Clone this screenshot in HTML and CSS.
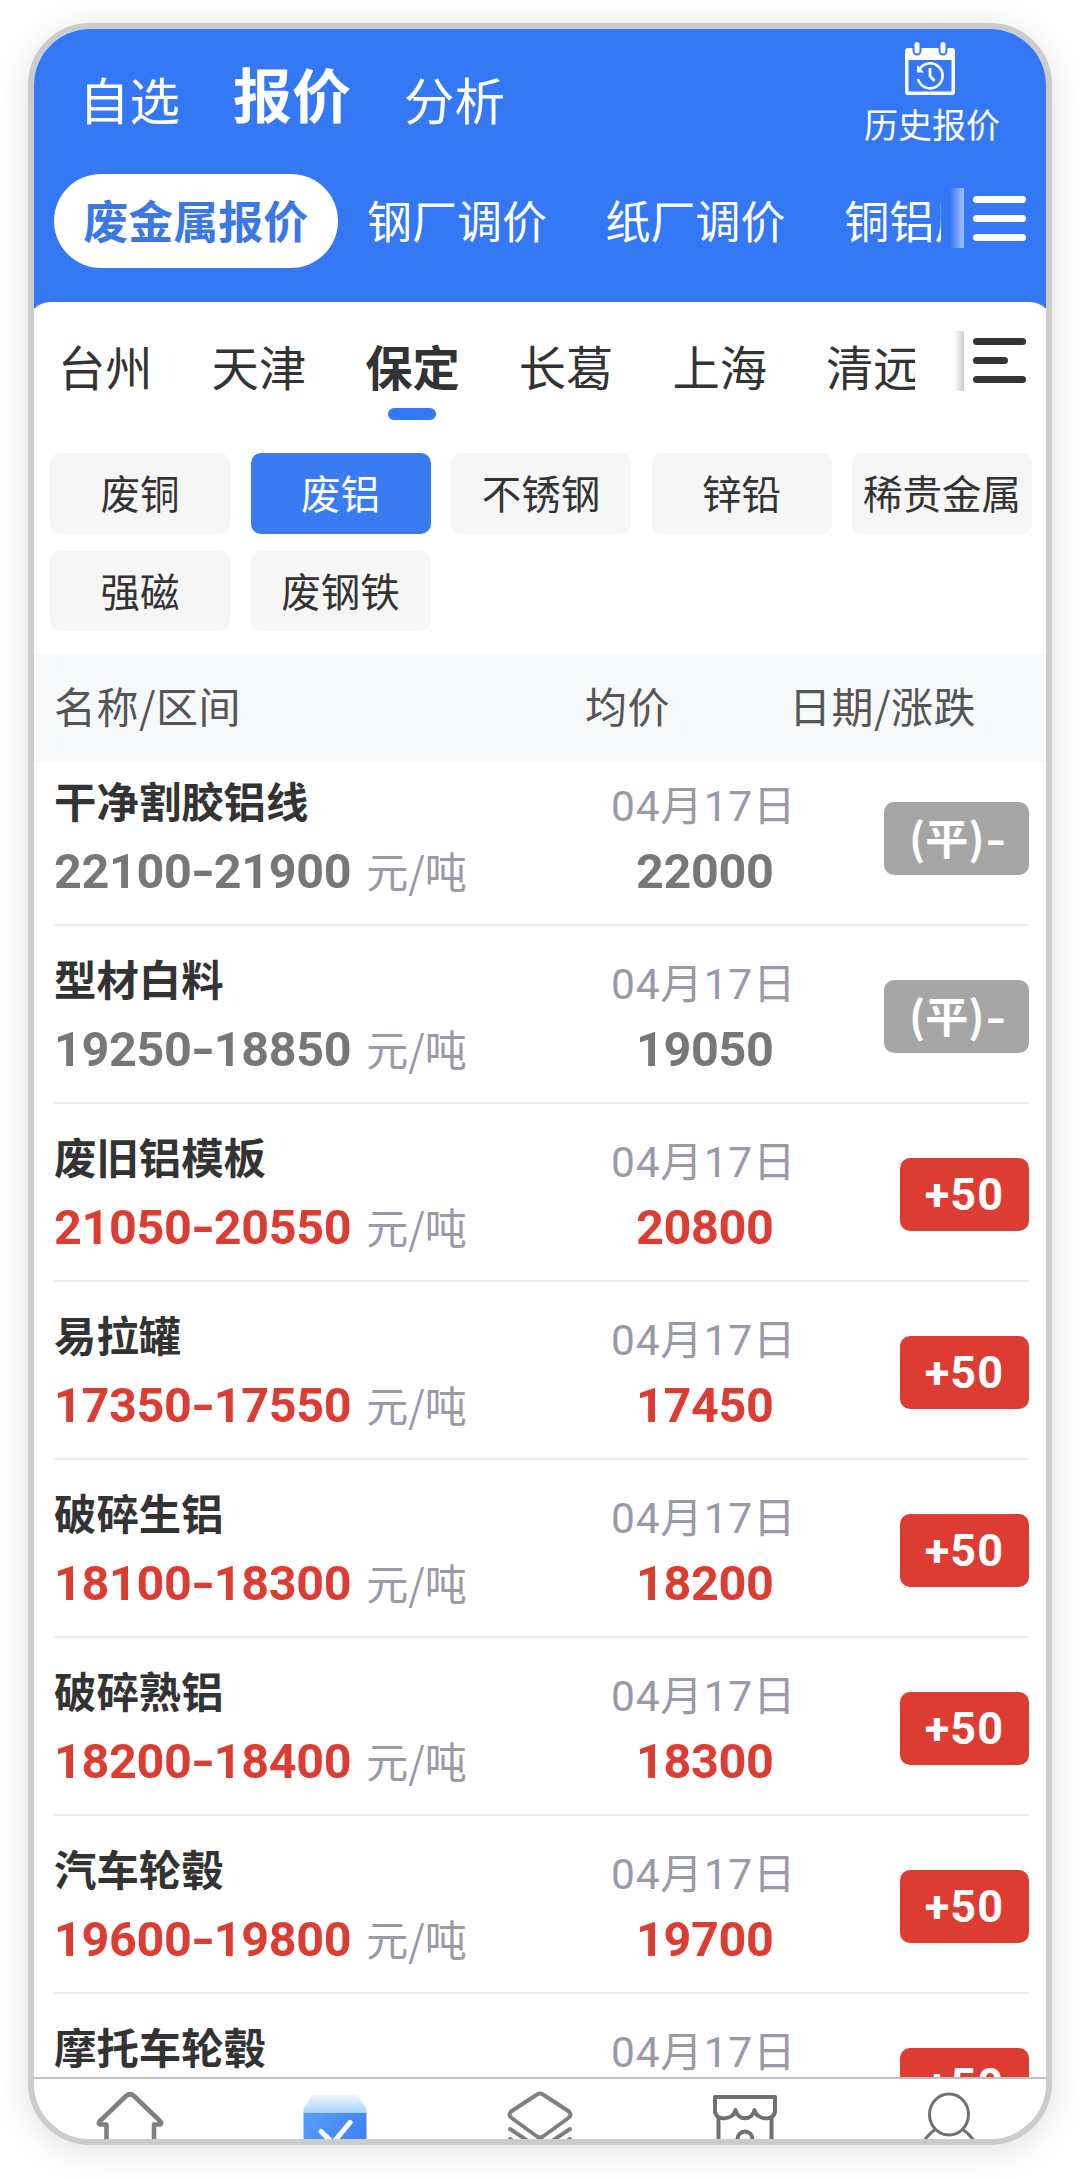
FILE: index.html
```html
<!DOCTYPE html>
<html lang="zh-CN">
<head>
    <meta charset="UTF-8">
    <meta name="viewport" content="width=device-width, initial-scale=1.0">
    <title>废金属报价</title>
    <link rel="stylesheet" href="styles.css">
</head>
<body>
    <div class="phone">
        <header>
            <div class="top-bar">
                <nav class="top-nav">
                    <a>自选</a>
                    <a class="active">报价</a>
                    <a>分析</a>
                </nav>
                <div class="history">
                    <svg width="52" height="56" viewBox="0 0 52 56" fill="none">
                        <path d="M4 7H48a3 3 0 0 1 3 3V51a3 3 0 0 1-3 3H4a3 3 0 0 1-3-3V10a3 3 0 0 1 3-3zM4.500 19V50.500H47.500V19z" fill="#fff" fill-rule="evenodd"/>
                        <path d="M13 4V10M39 4V10" stroke="#3478f6" stroke-width="9" stroke-linecap="round"/>
                        <path d="M13 3.500V10M39 3.500V10" stroke="#fff" stroke-width="5" stroke-linecap="round"/>
                        <path d="M15 29a12.500 12.500 0 1 1-1 9" stroke="#fff" stroke-width="2.600"/>
                        <path d="M13 24V31.500H20z" fill="#fff"/>
                        <path d="M26 27V35l4.500 5" stroke="#fff" stroke-width="2.800"/>
                    </svg>
                    <span>历史报价</span>
                </div>
            </div>
            <div class="category-bar">
                <div class="categories">
                    <a class="active">废金属报价</a>
                    <a>钢厂调价</a>
                    <a>纸厂调价</a>
                    <a>铜铝厂</a>
                </div>
                <div class="fade"></div>
                <div class="menu"><i></i><i></i><i></i></div>
            </div>
        </header>

        <main>
            <div class="city-bar">
                <div class="cities">
                    <a>台州</a>
                    <a>天津</a>
                    <a class="active">保定</a>
                    <a>长葛</a>
                    <a>上海</a>
                    <a>清远</a>
                </div>
                <div class="fade"></div>
                <div class="menu"><i></i><i class="short"></i><i></i></div>
            </div>

            <div class="metals">
                <a>废铜</a>
                <a class="active">废铝</a>
                <a>不锈钢</a>
                <a>锌铅</a>
                <a>稀贵金属</a>
                <a>强磁</a>
                <a>废钢铁</a>
            </div>

            <div class="list-head">
                <span>名称/区间</span>
                <span>均价</span>
                <span>日期/涨跌</span>
            </div>

            <div class="list">
                <div class="row flat">
                    <div class="info">
                        <h3>干净割胶铝线</h3>
                        <p><b>22100<i>-</i>21900</b><span>元/吨</span></p>
                    </div>
                    <div class="average">
                        <span>04月17日</span>
                        <b>22000</b>
                    </div>
                    <div class="change">(平)<i>-</i></div>
                </div>
                <div class="row flat">
                    <div class="info">
                        <h3>型材白料</h3>
                        <p><b>19250<i>-</i>18850</b><span>元/吨</span></p>
                    </div>
                    <div class="average">
                        <span>04月17日</span>
                        <b>19050</b>
                    </div>
                    <div class="change">(平)<i>-</i></div>
                </div>
                <div class="row">
                    <div class="info">
                        <h3>废旧铝模板</h3>
                        <p><b>21050<i>-</i>20550</b><span>元/吨</span></p>
                    </div>
                    <div class="average">
                        <span>04月17日</span>
                        <b>20800</b>
                    </div>
                    <div class="change">+50</div>
                </div>
                <div class="row">
                    <div class="info">
                        <h3>易拉罐</h3>
                        <p><b>17350<i>-</i>17550</b><span>元/吨</span></p>
                    </div>
                    <div class="average">
                        <span>04月17日</span>
                        <b>17450</b>
                    </div>
                    <div class="change">+50</div>
                </div>
                <div class="row">
                    <div class="info">
                        <h3>破碎生铝</h3>
                        <p><b>18100<i>-</i>18300</b><span>元/吨</span></p>
                    </div>
                    <div class="average">
                        <span>04月17日</span>
                        <b>18200</b>
                    </div>
                    <div class="change">+50</div>
                </div>
                <div class="row">
                    <div class="info">
                        <h3>破碎熟铝</h3>
                        <p><b>18200<i>-</i>18400</b><span>元/吨</span></p>
                    </div>
                    <div class="average">
                        <span>04月17日</span>
                        <b>18300</b>
                    </div>
                    <div class="change">+50</div>
                </div>
                <div class="row">
                    <div class="info">
                        <h3>汽车轮毂</h3>
                        <p><b>19600<i>-</i>19800</b><span>元/吨</span></p>
                    </div>
                    <div class="average">
                        <span>04月17日</span>
                        <b>19700</b>
                    </div>
                    <div class="change">+50</div>
                </div>
                <div class="row">
                    <div class="info">
                        <h3>摩托车轮毂</h3>
                    </div>
                    <div class="average">
                        <span>04月17日</span>
                    </div>
                    <div class="change">+50</div>
                </div>
            </div>
        </main>

        <footer>
            <!-- home -->
            <svg width="80" height="60" viewBox="0 0 80 60" fill="none" stroke="#808080" stroke-width="4.600" stroke-linejoin="round">
                <path d="M16.500 70V45.500H10Q8 44.500 9.500 42.500L36 17Q40 13.500 44 17L70.500 42.500Q72 44.500 70 45.500H64V70"/>
            </svg>
            <!-- quotes, current tab -->
            <svg width="80" height="60" viewBox="0 0 80 60" fill="none">
                <defs>
                    <linearGradient id="lid" x1="0" y1="0" x2="0" y2="1">
                        <stop offset="0" stop-color="#eef7ff"/>
                        <stop offset="1" stop-color="#a9d3fd"/>
                    </linearGradient>
                    <linearGradient id="box" x1="0" y1="0" x2="1" y2="0.600">
                        <stop offset="0" stop-color="#55a0f6"/>
                        <stop offset="1" stop-color="#3d7ff5"/>
                    </linearGradient>
                </defs>
                <path d="M8.500 34V30L16 18Q17.500 16 20 16H60Q62.500 16 64 18L71.500 30V34z" fill="url(#lid)"/>
                <path d="M8.500 34H71.500V80H8.500z" fill="url(#box)"/>
                <path d="M26 52.500L38 64 55 43.500" stroke="#fff" stroke-width="5" stroke-linecap="round" stroke-linejoin="round"/>
            </svg>
            <!-- layers -->
            <svg width="80" height="60" viewBox="0 0 80 60" fill="none" stroke="#808080" stroke-width="4" stroke-linecap="round" stroke-linejoin="round">
                <path d="M37 15.500Q40 13.500 43 15.500L69 32.500Q72 36 69 38.500L43 57.500Q40 59.500 37 57.500L11 38.500Q8 36 11 32.500z"/>
                <path d="M10 50L40 70 70 50M10 60L40 80 70 60"/>
            </svg>
            <!-- shop -->
            <svg width="80" height="60" viewBox="0 0 80 60" fill="none" stroke="#707070" stroke-width="4" stroke-linejoin="round">
                <path d="M10 18H70V32C70 42 52 42 49.500 31C47 42 33 42 30.500 31C28 42 10 42 10 32z"/>
                <path d="M13.500 38V70M66.500 38V70M32.500 64V60a7.500 7.500 0 0 1 15 0V64"/>
            </svg>
            <!-- profile -->
            <svg width="80" height="60" viewBox="0 0 80 60" fill="none" stroke="#707070" stroke-width="3">
                <ellipse cx="39" cy="35.500" rx="19.500" ry="20.500"/>
                <path d="M26 50Q18 55 12 65M52 50Q60 55 66 65"/>
            </svg>
        </footer>
    </div>
</body>
</html>
```

FILE: styles.css
```css
* {
    margin: 0;
    padding: 0;
    box-sizing: border-box;
}

body {
    font-family: "Noto Sans CJK SC", sans-serif;
    background: #fff;
    color: #333;
    padding: 23px 28px 34px;
}

i {
    font-style: normal;
}

.phone {
    width: 1024px;
    height: 2122px;
    display: flex;
    flex-direction: column;
    border: 6px solid #ccc;
    border-radius: 62px;
    background: #fff;
    overflow: hidden;
    box-shadow: 0 6px 36px rgba(0, 0, 0, 0.12);
}

/* Header */
header {
    flex: none;
    height: 293px;
    background: #3478f6;
    color: #fff;
}

.top-bar {
    height: 145px;
    display: flex;
    justify-content: space-between;
    padding: 0 46px 0 45px;
}

.top-nav {
    display: flex;
    align-items: center;
    gap: 53px;
    height: 138px;
    font-size: 50.5px;
    line-height: 60px;
}

.top-nav .active {
    font-size: 59px;
    font-weight: 700;
    padding-bottom: 11px;
}

.history {
    display: flex;
    flex-direction: column;
    align-items: center;
    gap: 7px;
    padding-top: 12px;
    font-size: 34px;
    line-height: 40px;
}

.history svg {
    margin-right: 4px;
}

.category-bar,
.city-bar {
    display: flex;
}

.category-bar {
    height: 94px;
    padding-left: 20px;
}

.categories {
    width: 887px;
    display: flex;
    overflow: hidden;
    white-space: nowrap;
    font-size: 45px;
    line-height: 92px;
}

.categories a {
    flex: none;
    padding: 0 29.3px;
}

.categories .active {
    height: 94px;
    border-radius: 47px;
    background: #fff;
    color: #3b78e4;
    font-weight: 700;
}

.fade {
    width: 14px;
    height: 60px;
    margin: 14px 9px 0 9px;
    background: linear-gradient(90deg, rgba(255, 255, 255, 0), rgba(255, 255, 255, 0.55));
}

.menu {
    display: flex;
    flex-direction: column;
    gap: 12px;
    padding-top: 22px;
}

.menu i {
    width: 53px;
    height: 7px;
    border-radius: 4px;
    background: #fff;
}

/* Content sheet */
main {
    flex: 1;
    min-height: 0;
    margin: -20px -6px 0;
    padding: 0 6px;
    border-radius: 22px 22px 0 0;
    background: #fff;
    overflow: hidden;
}

.city-bar {
    height: 151px;
    padding-left: 24px;
}

.cities {
    width: 857px;
    display: flex;
    gap: 59px;
    overflow: hidden;
    white-space: nowrap;
    font-size: 47.3px;
    line-height: 128px;
}

.cities a {
    flex: none;
    display: flex;
    flex-direction: column;
    align-items: center;
}

.cities .active {
    font-weight: 700;
}

.cities .active::after {
    content: "";
    width: 48px;
    height: 12px;
    margin-top: -22px;
    border-radius: 6px;
    background: #3478f6;
}

.city-bar .fade {
    width: 10px;
    margin: 29px 9px 0 39px;
    background: linear-gradient(90deg, rgba(0, 0, 0, 0), rgba(0, 0, 0, 0.2));
}

.city-bar .menu {
    padding-top: 36px;
}

.city-bar .menu i {
    background: #333;
}

.city-bar .menu .short {
    width: 35px;
}

.metals {
    height: 201px;
    display: grid;
    grid-template-columns: repeat(5, 180px);
    grid-auto-rows: 80.5px;
    gap: 17px 20.5px;
    padding-left: 16px;
}

.metals a {
    border-radius: 10px;
    background: #f6f6f6;
    text-align: center;
    font-size: 39.5px;
    line-height: 77px;
    white-space: nowrap;
}

.metals .active {
    background: #3b7bf2;
    color: #fff;
}

/* Price list */
.list-head {
    height: 108px;
    display: grid;
    grid-template-columns: 531px 204px 1fr;
    margin: 0 -6px;
    padding-left: 26px;
    background: #f6f8fa;
    color: #555;
    font-size: 42px;
    letter-spacing: 0.5px;
    line-height: 102px;
}

.row {
    height: 178px;
    display: grid;
    grid-template-columns: 530px 1fr auto;
    margin: 0 17px 0 20px;
    padding-top: 25px;
    border-bottom: 2px solid #eceef0;
    color: #dc3c32;
}

.row:first-child {
    height: 164px;
    padding-top: 11px;
}

.row.flat {
    color: #777;
}

.info h3 {
    color: #333;
    font-size: 42.4px;
    line-height: 54px;
}

.info p {
    display: flex;
    gap: 15px;
    padding-top: 11px;
    line-height: 68px;
}

.info p span {
    color: #9a9aa6;
    font-size: 42px;
    line-height: 64px;
}

.row b {
    font-family: Roboto, "Noto Sans CJK SC", sans-serif;
    font-size: 48.5px;
    font-weight: 700;
    letter-spacing: -0.3px;
}

.row b i {
    display: inline-block;
    width: 22px;
    text-align: center;
    transform: scaleX(1.3);
}

.average {
    display: flex;
    flex-direction: column;
    margin-left: 27px;
    line-height: 68px;
    white-space: nowrap;
}

.average span {
    color: #9a9aa6;
    font-family: Roboto, "Noto Sans CJK SC", sans-serif;
    font-size: 42.5px;
    letter-spacing: 0.8px;
    line-height: 68px;
}

.average b {
    margin: -3px 0 0 25px;
}

.change {
    height: 73px;
    margin-top: 29px;
    padding: 0 25px;
    border-radius: 10px;
    background: #dc3c32;
    color: #fff;
    font-family: Roboto, "Noto Sans CJK SC", sans-serif;
    font-size: 45px;
    font-weight: 700;
    letter-spacing: 1px;
    line-height: 73px;
}

.flat .change {
    width: 145px;
    padding-right: 0;
    background: #a5a5a5;
    font-family: "Noto Sans CJK SC", sans-serif;
    font-size: 43px;
    letter-spacing: 0;
    line-height: 68px;
}

.flat .change i {
    display: inline-block;
    margin-left: 3px;
    transform: scaleX(1.3);
}

/* Tab bar */
footer {
    flex: none;
    height: 62px;
    display: flex;
    justify-content: space-around;
    margin: 0 -6px;
    border-top: 2px solid #c0c0c0;
    background: #fff;
}
```
